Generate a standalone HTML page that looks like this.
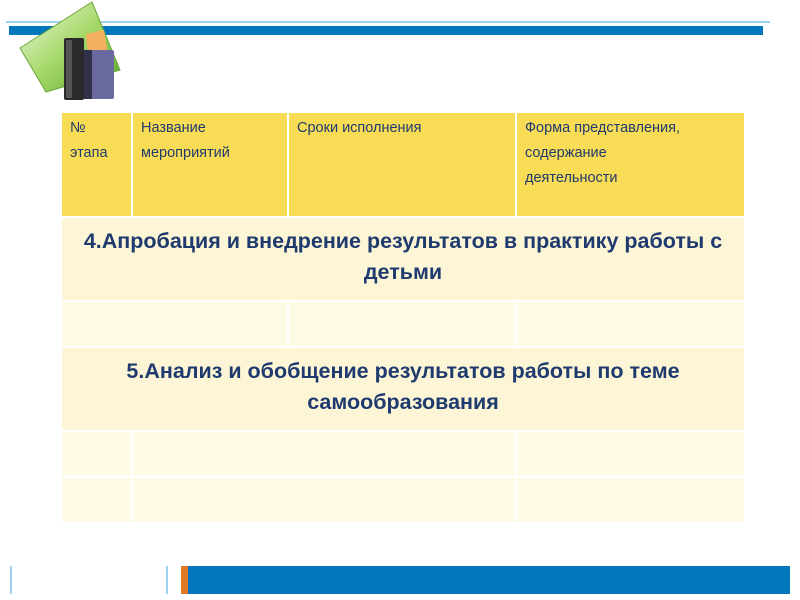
<!DOCTYPE html>
<html><head><meta charset="utf-8"><style>
body{margin:0;width:800px;height:600px;background:#fff;position:relative;overflow:hidden;font-family:"Liberation Sans",sans-serif}
.a{position:absolute}
table{position:absolute;left:60px;top:111px;width:684px;border-collapse:collapse;table-layout:fixed}
td{border:2px solid #fff;vertical-align:top;color:#1f3a6e;padding:0}
.h td{background:#f8dc55;height:97px;font-size:14.5px;line-height:25px;padding:3px 8px}
.t td{background:#fdf6d6;font-size:21.5px;font-weight:bold;text-align:center;line-height:31px;padding:8px 6px;height:66px}
.e td{background:#fefae6;height:44px}
</style></head><body>
<div class="a" style="left:6px;top:21px;width:764px;height:2px;background:#9fd2f0"></div>
<div class="a" style="left:9px;top:26px;width:754px;height:9px;background:#0077bd"></div>
<svg class="a" style="left:0;top:0" width="130" height="104" viewBox="0 0 130 104">
<defs><linearGradient id="g" x1="0" y1="0" x2="1" y2="1"><stop offset="0" stop-color="#eef8e2"/><stop offset=".5" stop-color="#a6d868"/><stop offset="1" stop-color="#5aa52a"/></linearGradient></defs>
<path d="M20 48 L92 2 L120 70 L46 92 Z" fill="url(#g)" stroke="#6aa83a"/>
<path d="M86 34 L104 30 L110 68 L90 74 Z" fill="#f4b060"/>
<rect x="64" y="38" width="20" height="62" rx="2" fill="#2a2a2a"/>
<rect x="66" y="40" width="6" height="58" fill="#555"/>
<rect x="84" y="50" width="30" height="49" rx="2" fill="#6a6aa0"/>
<rect x="84" y="50" width="8" height="49" fill="#30304a"/>
</svg>
<table>
<colgroup><col style="width:71px"><col style="width:156px"><col style="width:228px"><col style="width:229px"></colgroup>
<tr class="h"><td>№<br>этапа</td><td>Название<br>мероприятий</td><td>Сроки исполнения</td><td>Форма представления,<br>содержание<br>деятельности</td></tr>
<tr class="t"><td colspan="4">4.Апробация и внедрение результатов в практику работы с детьми</td></tr>
<tr class="e"><td colspan="2"></td><td></td><td></td></tr>
<tr class="t"><td colspan="4">5.Анализ и обобщение результатов работы по теме самообразования</td></tr>
<tr class="e"><td></td><td colspan="2"></td><td></td></tr>
<tr class="e"><td></td><td colspan="2"></td><td></td></tr>
</table>
<div class="a" style="left:10px;top:566px;width:2px;height:28px;background:#9fd2f0"></div>
<div class="a" style="left:166px;top:566px;width:2px;height:28px;background:#9fd2f0"></div>
<div class="a" style="left:181px;top:566px;width:609px;height:28px;background:#0077bd"></div>
<div class="a" style="left:181px;top:566px;width:7px;height:28px;background:#e07a20"></div>
</body></html>
